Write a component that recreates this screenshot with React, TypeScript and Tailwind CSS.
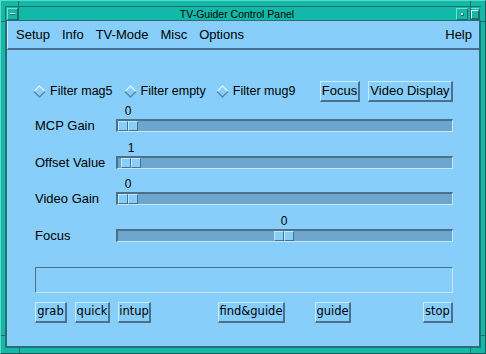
import React from "react";

const DARK = "border-[#4a708b]";

function Diamond() {
  return (
    <svg width="13" height="13" viewBox="0 0 13 13" className="shrink-0">
      <path d="M1 6.5 L6.5 1 L12 6.5" stroke="#d6f1ff" strokeWidth="1.4" fill="none" />
      <path d="M1 6.5 L6.5 12 L12 6.5" stroke="#5b86a3" strokeWidth="1.4" fill="none" />
    </svg>
  );
}

function Btn({ label, className = "" }: { label: string; className?: string }) {
  return (
    <button
      className={`h-[21px] flex items-center justify-center bg-[#87cefa] border border-t-[#c8ebff] border-l-[#c8ebff] border-b-2 border-r-2 border-b-[#4a708b] border-r-[#4a708b] text-black ${className}`}
    >
      {label}
    </button>
  );
}

const sliders = [
  { label: "MCP Gain", value: "0", pos: 0, mt: "mt-[1px]" },
  { label: "Offset Value", value: "1", pos: 3, mt: "mt-[8px]" },
  { label: "Video Gain", value: "0", pos: 0, mt: "mt-[7px]" },
  { label: "Focus", value: "0", pos: 156, mt: "mt-[8px]" },
];

function Slider({ label, value, pos, mt }: { label: string; value: string; pos: number; mt: string }) {
  return (
    <div className={`flex items-end ${mt}`}>
      <div className="w-[81px] h-[13px] flex items-center text-[13px] whitespace-nowrap">{label}</div>
      <div className="flex-1 flex flex-col">
        <div className="h-[16px] flex items-center">
          <div className="w-[20px] text-center text-[12px] leading-[16px]" style={{ marginLeft: pos + 2 }}>
            {value}
          </div>
        </div>
        <div className={`h-[13px] bg-[#6ca6cd] border-t-2 border-l-2 ${DARK} border-b border-r border-b-[#c6e8fc] border-r-[#c6e8fc] flex`}>
          <div className="flex h-full" style={{ marginLeft: pos }}>
            <div className="w-[10px] h-full bg-[#87cefa] border border-t-[#c6e8fc] border-l-[#c6e8fc] border-b-[#4a708b] border-r-[#4a708b]" />
            <div className="w-[10px] h-full bg-[#87cefa] border border-t-[#c6e8fc] border-l-[#c6e8fc] border-b-[#4a708b] border-r-[#4a708b]" />
          </div>
        </div>
      </div>
    </div>
  );
}

export default function App() {
  return (
    <div className="relative w-[486px] h-[354px] overflow-hidden bg-[#12b8a8] border-t border-l border-t-[#5fd8c8] border-l-[#5fd8c8] border-b border-r border-b-[#0c5f58] border-r-[#0c5f58] px-[4px] pt-[5px] pb-[5px] flex flex-col font-['Liberation_Sans',Arial,sans-serif] text-black">
      {/* frame handle lines */}
      <div className="absolute left-[17px] top-0 w-px h-[20px] bg-[#1d6e68]" />
      <div className="absolute left-[469px] top-0 w-px h-[20px] bg-[#1d6e68]" />
      <div className="absolute left-0 top-[20px] w-[5px] h-px bg-[#1d6e68]" />
      <div className="absolute right-0 top-[20px] w-[5px] h-px bg-[#1d6e68]" />
      <div className="absolute left-[18px] bottom-0 w-px h-[6px] bg-[#1d6e68]" />
      <div className="absolute left-[469px] bottom-0 w-px h-[6px] bg-[#1d6e68]" />
      <div className="absolute left-0 top-[334px] w-[5px] h-px bg-[#1d6e68]" />
      <div className="absolute right-0 top-[334px] w-[5px] h-px bg-[#1d6e68]" />

      {/* title bar */}
      <div className="h-[14px] border-t border-l border-[#1d6e68] flex items-start pl-[1px] pt-px">
        <div className="w-[11px] h-[12px] border border-t-[#6fe0d2] border-l-[#6fe0d2] border-b-[#1d6e68] border-r-[#1d6e68] flex items-center justify-center">
          <div className="w-[5px] h-[2px] bg-[#e8fffb] border-b border-[#1d6e68]" />
        </div>
        <div className="flex-1 h-[12px] flex items-center justify-center text-[10.5px] leading-none">
          TV-Guider Control Panel
        </div>
        <div className="w-[12px] h-[12px] border border-t-[#6fe0d2] border-l-[#6fe0d2] border-b-[#1d6e68] border-r-[#1d6e68] flex items-center justify-center">
          <div className="w-[3px] h-[3px] bg-[#e8fffb] border-b border-r border-[#1d6e68]" />
        </div>
        <div className="w-[10px] h-[12px] ml-[2px] mr-[1px] border border-t-[#6fe0d2] border-l-[#6fe0d2] border-b-[#1d6e68] border-r-[#1d6e68] flex items-center justify-center">
          <div className="w-[8px] h-[9px] border border-t-[#e8fffb] border-l-[#e8fffb] border-b-[#1d6e68] border-r-[#1d6e68]" />
        </div>
      </div>

      {/* client area */}
      <div className="flex-1 flex flex-col bg-[#87cefa] border-t border-l-2 border-r-2 border-b-2 border-[#2f6c72]">
        <div className="h-[29px] flex items-center pl-[8px] pr-[7px] gap-[12px] text-[13px] border-b-2 border-[#4a708b] border-l border-l-[#c8ebff]">
          <span>Setup</span>
          <span>Info</span>
          <span>TV-Mode</span>
          <span>Misc</span>
          <span>Options</span>
          <span className="ml-auto">Help</span>
        </div>

        <div className="flex flex-col pl-[28px] pr-[26px]">
          <div className="mt-[31px] h-[21px] flex items-center -ml-[2px] text-[12.5px]">
            <Diamond />
            <span className="ml-[4px]">Filter mag5</span>
            <span className="ml-[11px]"><Diamond /></span>
            <span className="ml-[4px]">Filter empty</span>
            <span className="ml-[10px]"><Diamond /></span>
            <span className="ml-[4px]">Filter mug9</span>
            <Btn label="Focus" className="ml-auto w-[40px] text-[13px]" />
            <Btn label="Video Display" className="ml-[8px] w-[85px] text-[13px]" />
          </div>

          {sliders.map((s) => (
            <Slider key={s.label} {...s} />
          ))}

          <div className={`mt-[25px] h-[26px] border-t border-l ${DARK} border-b border-r border-b-[#c6e8fc] border-r-[#c6e8fc]`} />

          <div className="mt-[9px] flex items-center text-[11.5px] font-['DejaVu_Sans',sans-serif]">
            <Btn label="grab" className="w-[32px]" />
            <Btn label="quick" className="ml-[8px] w-[35px]" />
            <Btn label="intup" className="ml-[8px] w-[33px]" />
            <Btn label="find&guide" className="ml-[67px] w-[67px]" />
            <Btn label="guide" className="ml-[30px] w-[36px]" />
            <Btn label="stop" className="ml-auto w-[30px]" />
          </div>
        </div>
      </div>
    </div>
  );
}
